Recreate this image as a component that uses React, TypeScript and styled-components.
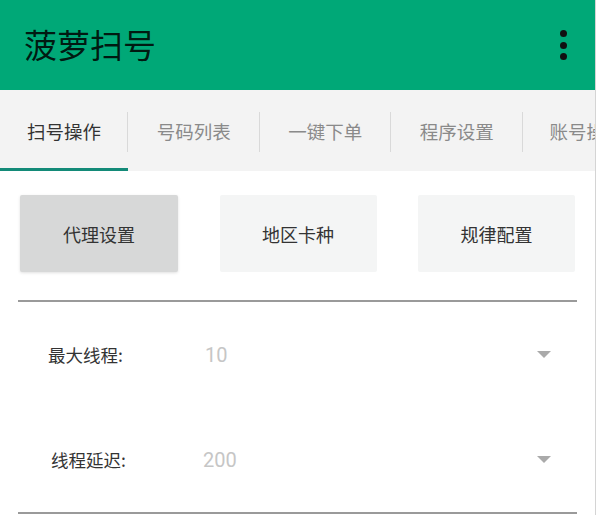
import React, { useState } from 'react';
import styled, { createGlobalStyle } from 'styled-components';

const GlobalStyle = createGlobalStyle`
  html, body {
    margin: 0;
    padding: 0;
    background: #fff;
  }
  body {
    font-family: Roboto, "Noto Sans CJK SC", sans-serif;
  }
`;

// --- Styled Components ---
const Screen = styled.div`
  width: 595px;
  height: 515px;
  border-right: 1px solid #d4d4d4;
  background: #fff;
  display: flex;
  flex-direction: column;
  overflow: hidden;
`;

const AppBar = styled.header`
  height: 90px;
  flex-shrink: 0;
  background: #00a877;
  display: flex;
  align-items: center;
  justify-content: space-between;
  padding: 0 22px 0 24px;
`;

const Title = styled.h1`
  margin: 0;
  font-size: 33px;
  font-weight: 400;
  color: rgba(0, 0, 0, 0.85);
  font-family: "Noto Sans CJK SC", sans-serif;
  transform: translateY(-1px);
`;

const MenuButton = styled.button`
  border: none;
  background: none;
  padding: 0;
  width: 20px;
  height: 30px;
  display: flex;
  flex-direction: column;
  align-items: center;
  justify-content: space-between;
  cursor: pointer;
`;

const Dot = styled.span`
  width: 7px;
  height: 7px;
  border-radius: 50%;
  background: #111;
`;

const TabBar = styled.nav`
  height: 81px;
  flex-shrink: 0;
  background: #f3f3f3;
  display: flex;
  align-items: stretch;
  overflow: hidden;
`;

const Tab = styled.div<{ active?: boolean }>`
  position: relative;
  flex: 0 0 131.5px;
  display: flex;
  align-items: center;
  justify-content: center;
  font-family: "Noto Sans CJK SC", sans-serif;
  font-size: 18.5px;
  color: ${p => (p.active ? '#333' : '#8a8a8a')};
  white-space: nowrap;
  cursor: pointer;

  &:first-child {
    flex-basis: 128px;
  }

  &:not(:last-child)::after {
    content: '';
    position: absolute;
    right: 0;
    top: 22px;
    bottom: 19px;
    width: 1px;
    background: #d9d9d9;
  }

  &::before {
    content: '';
    display: ${p => (p.active ? 'block' : 'none')};
    position: absolute;
    left: 0;
    right: 0;
    bottom: 0;
    height: 3px;
    background: #138a78;
  }
`;

const LastTab = styled(Tab)`
  justify-content: flex-start;
  padding-left: 27px;
`;

const Content = styled.main`
  padding: 24px 20px 0 18px;
  display: flex;
  flex-direction: column;
`;

const ButtonRow = styled.div`
  display: grid;
  grid-template-columns: 158px 157px 157px;
  justify-content: space-between;
  padding: 0 0 0 2px;
  width: 557px;
  box-sizing: border-box;
`;

const ActionButton = styled.button<{ pressed?: boolean }>`
  height: 77px;
  border: none;
  border-radius: 2px;
  background: ${p => (p.pressed ? '#d7d8d8' : '#f4f5f5')};
  box-shadow: ${p => (p.pressed ? '0 1px 3px rgba(0,0,0,0.12)' : 'none')};
  font-family: "Noto Sans CJK SC", sans-serif;
  font-size: 18px;
  color: #333;
  cursor: pointer;
`;

const Divider = styled.hr<{ gap: number }>`
  margin: ${p => p.gap}px 0 0 0;
  width: 559px;
  border: none;
  height: 2px;
  background: #9a9a9a;
`;

const SettingsList = styled.div`
  display: flex;
  flex-direction: column;
`;

const SettingRow = styled.div<{ indent: number }>`
  height: 105px;
  display: flex;
  align-items: center;
  padding-left: ${p => p.indent}px;
`;

const Label = styled.span`
  width: 157px;
  font-family: "Noto Sans CJK SC", sans-serif;
  font-size: 17.5px;
  color: #333;
  flex-shrink: 0;
`;

const Select = styled.div<{ shift: number }>`
  flex: 1;
  display: flex;
  align-items: center;
  justify-content: space-between;
  margin-left: ${p => p.shift}px;
  padding-right: 24px;
`;

const Value = styled.span`
  font-family: Roboto, sans-serif;
  font-size: 20px;
  color: #c6c6c6;
`;

const Caret = styled.span`
  width: 0;
  height: 0;
  border-left: 7px solid transparent;
  border-right: 7px solid transparent;
  border-top: 7px solid #aaa;
`;

const tabs = ['扫号操作', '号码列表', '一键下单', '程序设置'];
const actions = ['代理设置', '地区卡种', '规律配置'];
const settings = [
  { label: '最大线程:', value: '10', indent: 30, shift: 0 },
  { label: '线程延迟:', value: '200', indent: 33, shift: -5 },
];

export default function App() {
  const [activeTab, setActiveTab] = useState(0);
  const [pressed, setPressed] = useState(0);

  return (
    <>
      <GlobalStyle />
      <Screen>
        <AppBar>
          <Title>菠萝扫号</Title>
          <MenuButton aria-label="more">
            <Dot />
            <Dot />
            <Dot />
          </MenuButton>
        </AppBar>
        <TabBar>
          {tabs.map((t, i) => (
            <Tab key={t} active={activeTab === i} onClick={() => setActiveTab(i)}>
              {t}
            </Tab>
          ))}
          <LastTab active={activeTab === 4} onClick={() => setActiveTab(4)}>
            账号操作
          </LastTab>
        </TabBar>
        <Content>
          <ButtonRow>
            {actions.map((a, i) => (
              <ActionButton key={a} pressed={pressed === i} onClick={() => setPressed(i)}>
                {a}
              </ActionButton>
            ))}
          </ButtonRow>
          <Divider gap={28} />
          <SettingsList>
            {settings.map(s => (
              <SettingRow key={s.label} indent={s.indent}>
                <Label>{s.label}</Label>
                <Select shift={s.shift}>
                  <Value>{s.value}</Value>
                  <Caret />
                </Select>
              </SettingRow>
            ))}
          </SettingsList>
          <Divider gap={0} />
        </Content>
      </Screen>
    </>
  );
}
